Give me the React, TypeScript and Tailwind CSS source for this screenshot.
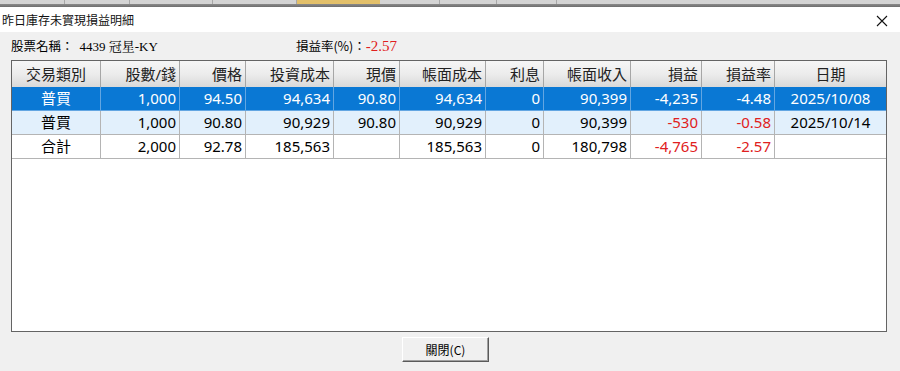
import React from "react";

const COLS = "grid-cols-[89px_79px_66px_88px_66px_86px_58px_87px_71px_73px_111px]";

type Row = {
  cells: string[];
  red?: number[];
};

const HEAD = ["交易類別", "股數/錢", "價格", "投資成本", "現價", "帳面成本", "利息", "帳面收入", "損益", "損益率", "日期"];

const ROWS: Row[] = [
  { cells: ["普買", "1,000", "94.50", "94,634", "90.80", "94,634", "0", "90,399", "-4,235", "-4.48", "2025/10/08"] },
  { cells: ["普買", "1,000", "90.80", "90,929", "90.80", "90,929", "0", "90,399", "-530", "-0.58", "2025/10/14"], red: [8, 9] },
  { cells: ["合計", "2,000", "92.78", "185,563", "", "185,563", "0", "180,798", "-4,765", "-2.57", ""], red: [8, 9] },
];

const FONT = "font-['Noto_Sans','Noto_Sans_CJK_TC',sans-serif]";

function align(i: number) {
  if (i === 0 || i === 10) return "justify-center";
  return "justify-end pr-[3px]";
}

export default function App() {
  return (
    <div className="relative h-[371px] w-[900px] overflow-hidden bg-[#f0f0f0] font-['Noto_Sans_CJK_TC',sans-serif] text-black">
      {/* taskbar strip behind */}
      <div className="flex h-[4px] bg-[#d4d4d4]">
        <div className="w-[65px] border-r border-[#a8a8a8]" />
        <div className="w-[65px] border-r border-[#a8a8a8]" />
        <div className="w-[83px] border-r border-[#a8a8a8]" />
        <div className="w-[84px] border-r border-[#a8a8a8]" />
        <div className="w-[83px] bg-[#e3c06a]" />
        <div className="w-[60px] border-r border-[#a8a8a8]" />
        <div className="w-[57px] border-r border-[#a8a8a8]" />
        <div className="w-[60px] border-r border-[#a8a8a8]" />
        <div className="flex-1" />
      </div>
      <div className="h-[3px] bg-gradient-to-b from-[#8a8a8a] to-[#6e6e6e]" />

      {/* title bar */}
      <div className="flex h-[25px] items-center justify-between bg-white pl-[2px] pr-[12px]">
        <span className="text-[12px] leading-none text-[#111]">昨日庫存未實現損益明細</span>
        <svg width="12" height="12" viewBox="0 0 12 12" className="mt-[2px]">
          <path d="M1 1 L11 11 M11 1 L1 11" stroke="#111" strokeWidth="1.1" />
        </svg>
      </div>

      {/* info line */}
      <div className="flex h-[28px] items-center text-[12.5px] leading-none">
        <span className="ml-[11px]">股票名稱：</span>
        <span className="ml-[6px] font-['Liberation_Serif','Noto_Serif_CJK_TC','Noto_Sans_CJK_TC',serif] text-[13px]">4439 冠星-KY</span>
        <span className="ml-[138px]">損益率(%)：</span>
        <span className="font-['Liberation_Serif',serif] text-[15px] text-[#e02020]">-2.57</span>
      </div>

      {/* grid */}
      <div className={`ml-[11px] h-[272px] w-[876px] border border-[#646464] bg-white ${FONT} text-[15px]`}>
        <div className={`grid ${COLS} h-[26px] bg-gradient-to-b from-[#f6f6f6] via-[#ececec] to-[#d9d9d9]`}>
          {HEAD.map((h, i) => (
            <div
              key={h}
              className={`flex items-center border-r border-[#a6a6a6] text-[#222] ${align(i)} ${i === 10 ? "border-r-0" : ""}`}
            >
              {h}
            </div>
          ))}
        </div>
        {ROWS.map((r, ri) => {
          const bg = ri === 0 ? "bg-[#0a78d4] text-white" : ri === 1 ? "bg-[#e2f0fc]" : "bg-white text-black";
          const line = ri === 0 ? "border-[#63a6e2]" : "border-[#b4b4b4]";
          return (
            <div key={ri} className={`grid ${COLS} h-[24px] border-b ${line} ${bg}`}>
              {r.cells.map((c, i) => (
                <div
                  key={i}
                  className={`flex items-center border-r ${line} leading-none ${align(i)} ${
                    r.red?.includes(i) ? "text-[#e02020]" : ""
                  } ${i === 10 ? "border-r-0" : ""}`}
                >
                  {c}
                </div>
              ))}
            </div>
          );
        })}
      </div>

      {/* button */}
      <div className="mt-[5px] flex">
        <button
          type="button"
          className="ml-[402px] h-[25px] w-[87px] border border-t-white border-l-white border-b-[#5a5a5a] border-r-[#5a5a5a] bg-[#f0f0f0] text-[12px] leading-none shadow-[inset_-1px_-1px_0_#a0a0a0]"
        >
          關閉(C)
        </button>
      </div>
    </div>
  );
}
